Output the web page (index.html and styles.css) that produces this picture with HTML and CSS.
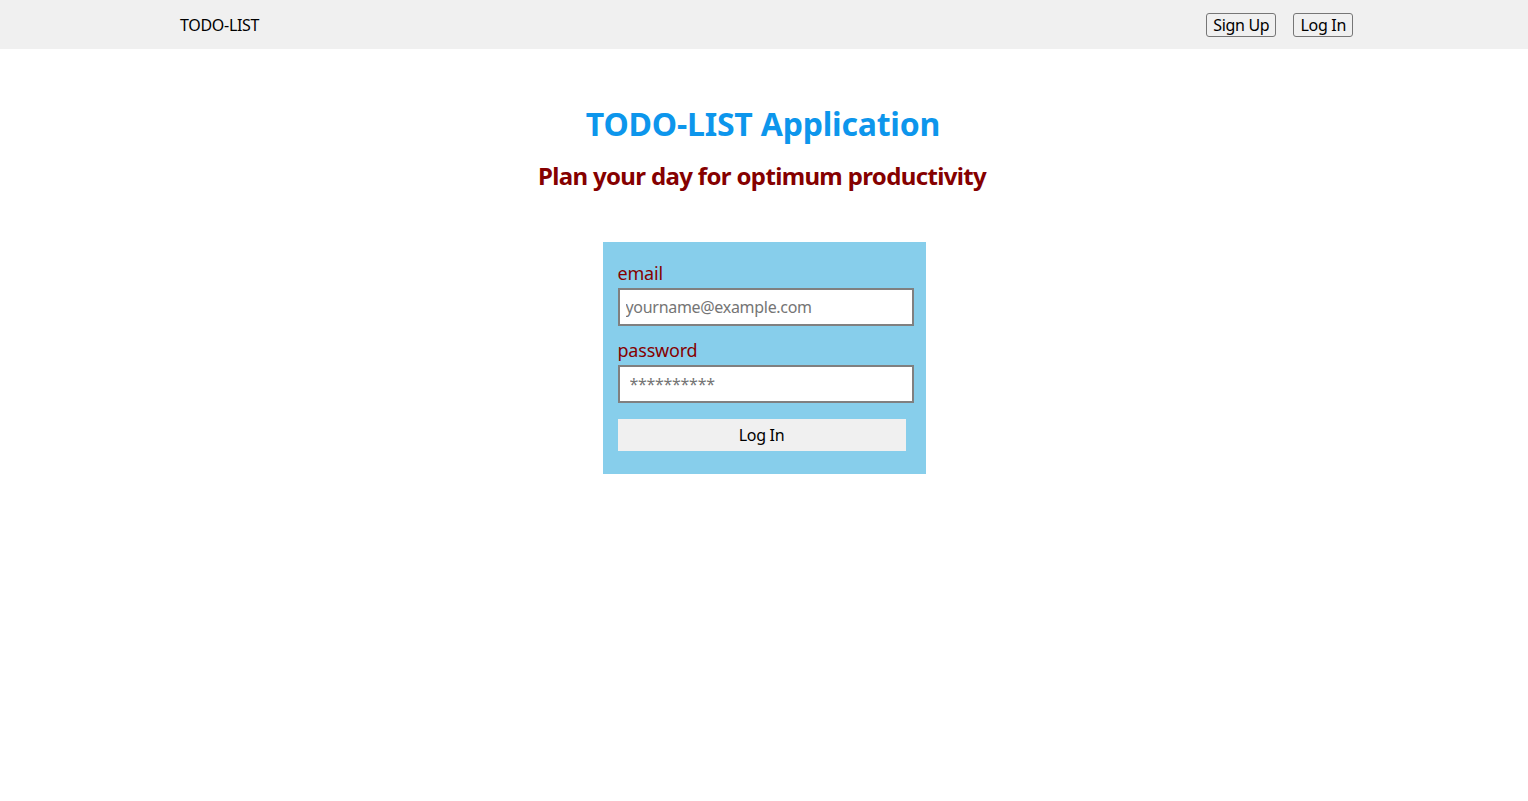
FILE: index.html
```html
<!DOCTYPE html>
<html lang="en">
<head>
<meta charset="utf-8">
<title>TODO-LIST</title>
<link rel="stylesheet" href="styles.css">
</head>
<body>
<header class="topbar">
  <div class="brand">TODO-LIST</div>
  <nav class="nav">
    <button class="nav-btn">Sign Up</button>
    <button class="nav-btn">Log In</button>
  </nav>
</header>
<main class="main">
  <h1 class="title">TODO-LIST Application</h1>
  <h2 class="subtitle">Plan your day for optimum productivity</h2>
  <form class="login">
    <label class="label label-email" for="email">email</label>
    <input class="field" id="email" type="email" placeholder="yourname@example.com">
    <label class="label label-pass" for="pass">password</label>
    <input class="field field-pass" id="pass" type="password" placeholder="**********">
    <button class="submit" type="button">Log In</button>
  </form>
</main>
</body>
</html>
```
FILE: styles.css
```css
* { box-sizing: border-box; }
html, body { margin: 0; padding: 0; background: #fff; }
body { font-family: "Noto Sans", "Open Sans", sans-serif; color: #000; }

.topbar {
  height: 49px;
  background: #f0f0f0;
  display: flex;
  align-items: center;
  justify-content: space-between;
  padding: 0 175px 0 180px;
}
.brand { font-size: 16px; letter-spacing: -0.3px; }
.nav { display: flex; gap: 17px; align-items: center; }
.nav-btn {
  font-family: inherit;
  font-size: 16px;
  height: 24px;
  padding: 0 6px;
  background: #f0f0f0;
  border: 1px solid #767676;
  border-radius: 3px;
  color: #000;
  line-height: 20px;
  letter-spacing: -0.3px;
}

.main { display: flex; flex-direction: column; align-items: center; }
.title {
  margin: 54px 0 0 -2px;
  font-size: 32px;
  line-height: 42px;
  font-weight: 700;
  color: #0d96ec;
  letter-spacing: -0.2px;
}
.subtitle {
  margin: 15px 0 0 -4px;
  font-size: 24px;
  line-height: 32px;
  font-weight: 700;
  color: #850000;
  letter-spacing: -0.65px;
}

.login {
  margin-top: 50px;
  width: 323px;
  height: 232px;
  background: #87ceeb;
  padding: 19px 12px 0 15px;
  display: flex;
  flex-direction: column;
}
.label {
  font-size: 18px;
  line-height: 24px;
  color: #850000;
  letter-spacing: -0.2px;
}
.label-email { margin-bottom: 3px; }
.label-pass { margin-top: 12px; margin-bottom: 3px; }
.field {
  width: 296px;
  height: 38px;
  border: 2px solid #808080;
  background: #fff;
  font-family: inherit;
  font-size: 16px;
  padding: 0 6px;
  letter-spacing: -0.3px;
}
.field::placeholder { color: #757575; }
.field-pass { padding-left: 10px; }
.submit {
  margin-top: 16px;
  width: 288px;
  height: 32px;
  border: none;
  background: #f0f0f0;
  font-family: inherit;
  font-size: 16px;
  color: #000;
  letter-spacing: -0.3px;
}
```
